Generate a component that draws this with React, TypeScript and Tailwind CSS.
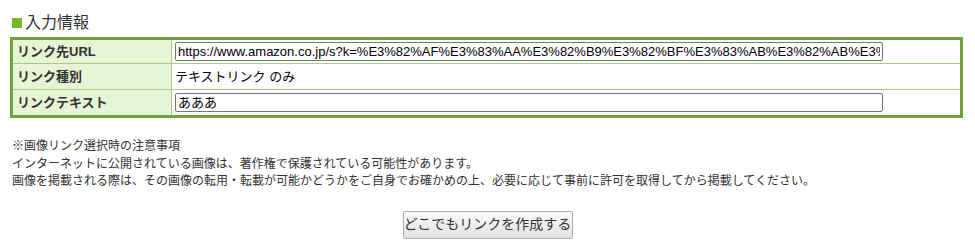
import React from 'react';

const font = '"Liberation Sans", "Noto Sans CJK JP", sans-serif';

const App: React.FC = () => {
  const url =
    'https://www.amazon.co.jp/s?k=%E3%82%AF%E3%83%AA%E3%82%B9%E3%82%BF%E3%83%AB%E3%82%AB%E3%82%A4%E3%82%B6%E3%83%BC';

  return (
    <div className="w-[975px] h-[252px] bg-white text-[#333]" style={{ fontFamily: font }}>
      <div className="pl-[10px] pt-[13px]">
        {/* 見出し */}
        <h2 className="flex items-center h-[20px] text-[16px] leading-[20px] text-[#333] font-normal">
          <span className="inline-block w-[10px] h-[10px] bg-[#76b82a] mr-[3px] ml-[2px]" />
          入力情報
        </h2>

        {/* 入力テーブル */}
        <table className="mt-[4px] w-[953px] border-collapse border-[3px] border-[#71a33c] text-[13px]">
          <tbody>
            <tr className="h-[25px] border-b border-[#a9cc82]">
              <th className="w-[160px] bg-[#e7f4d5] border-r border-[#a9cc82] text-left font-bold px-[4px]">
                リンク先URL
              </th>
              <td className="px-[3px]">
                <input
                  readOnly
                  value={url}
                  className="w-[708px] h-[19px] border border-[#767676] rounded-[2px] px-[2px] text-[13px] text-black outline-none"
                  style={{ fontFamily: font }}
                />
              </td>
            </tr>
            <tr className="h-[26px] border-b border-[#a9cc82]">
              <th className="bg-[#e7f4d5] border-r border-[#a9cc82] text-left font-bold px-[4px]">
                リンク種別
              </th>
              <td className="px-[3px] text-black">テキストリンク のみ</td>
            </tr>
            <tr className="h-[27px]">
              <th className="bg-[#e7f4d5] border-r border-[#a9cc82] text-left font-bold px-[4px]">
                リンクテキスト
              </th>
              <td className="px-[3px]">
                <input
                  readOnly
                  value="あああ"
                  className="w-[708px] h-[19px] border border-[#767676] rounded-[2px] px-[2px] text-[13px] text-black outline-none"
                  style={{ fontFamily: font }}
                />
              </td>
            </tr>
          </tbody>
        </table>

        {/* 注意事項 */}
        <div className="mt-[20px] pl-[2px] text-[12px] leading-[17.5px] text-[#333]">
          <p>※画像リンク選択時の注意事項</p>
          <p>インターネットに公開されている画像は、著作権で保護されている可能性があります。</p>
          <p>
            画像を掲載される際は、その画像の転用・転載が可能かどうかをご自身でお確かめの上、必要に応じて事前に許可を取得してから掲載してください。
          </p>
        </div>
      </div>

      <div className="flex justify-center mt-[20px]">
        <button
          className="w-[170px] h-[28px] border border-[#adadad] rounded-[2px] bg-gradient-to-b from-[#fafafa] to-[#e2e2e2] text-[14px] text-[#333]"
          style={{ fontFamily: font }}
        >
          どこでもリンクを作成する
        </button>
      </div>
    </div>
  );
};

export default App;
